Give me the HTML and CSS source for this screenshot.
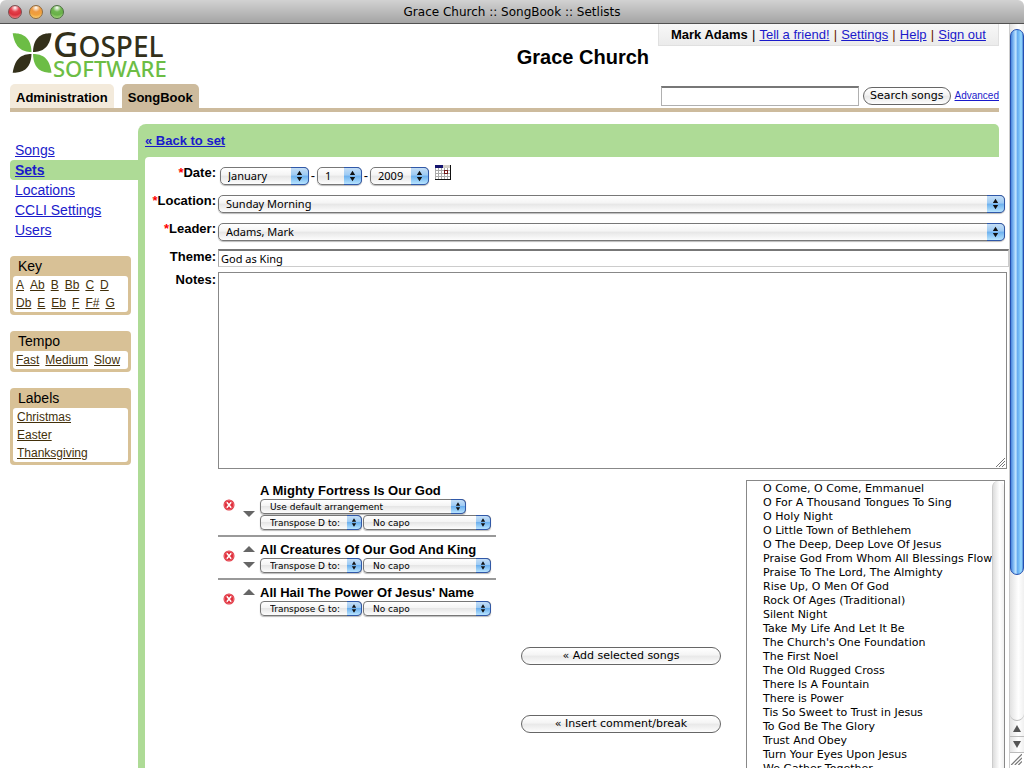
FILE: index.html
```html
<!DOCTYPE html>
<html lang="en">
<head>
    <meta charset="UTF-8">
    <meta name="viewport" content="width=device-width, initial-scale=1.0">
    <title>Grace Church :: SongBook :: Setlists</title>
    <link rel="stylesheet" href="styles.css">
</head>
<body>
    <!-- shared icons -->
    <svg class="defs" width="0" height="0">
        <symbol id="arrows" viewBox="0 0 18 18">
            <path d="M9 3l3 5H6zM9 15l3-5H6z" fill="#111"/>
        </symbol>
        <symbol id="remove" viewBox="0 0 12 12">
            <circle cx="6" cy="6" r="5.5" fill="#e0303c"/>
            <circle cx="6" cy="6" r="4.6" fill="none" stroke="#f08088" stroke-width=".6"/>
            <path d="M3.8 3.2l4.4 5.6M8.2 3.2L3.8 8.8" stroke="#fff" stroke-width="1.5"/>
        </symbol>
        <symbol id="up" viewBox="0 0 12 6"><path d="M6 0l6 6H0z" fill="#666"/></symbol>
        <symbol id="down" viewBox="0 0 12 6"><path d="M6 6l6-6H0z" fill="#666"/></symbol>
        <symbol id="grip" viewBox="0 0 10 10">
            <path d="M1 10l9-9M4 10l6-6M7 10l3-3" stroke="#777" fill="none"/>
        </symbol>
    </svg>

    <div class="titlebar">
        <div class="lights">
            <span class="light red"></span>
            <span class="light orange"></span>
            <span class="light green"></span>
        </div>
        <span class="window-title">Grace Church :: SongBook :: Setlists</span>
    </div>

    <div class="viewport">
        <div class="page">
            <header class="header">
                <div class="brand">
                    <svg class="logo" width="156" height="54" viewBox="0 0 156 54" role="img" aria-label="Gospel Software">
                        <path d="M2.700 4.300C10 4 21 6 21.500 23C12 23 5 19 2.700 4.300z" fill="#6cbd45"/>
                        <path d="M41.500 4.300C34 4 23.500 6 23 23C32.500 23 39.500 19 41.500 4.300z" fill="#33301a"/>
                        <path d="M2.700 43.700C10 44 21 42 21.500 25C12 25 5 29 2.700 43.700z" fill="#33301a"/>
                        <path d="M41.500 43.700C34 44 23.500 42 23 25C32.500 25 39.500 29 41.500 43.700z" fill="#6cbd45"/>
                        <text class="logo-top" x="43" y="28"><tspan class="logo-cap">G</tspan>OSPEL</text>
                        <text class="logo-bottom" x="43" y="48">SOFTWARE</text>
                    </svg>
                    <nav class="tabs">
                        <a href="#" class="tab">Administration</a>
                        <a href="#" class="tab active">SongBook</a>
                    </nav>
                </div>
                <h1>Grace Church</h1>
                <div class="tools">
                    <div class="userbar">
                        <b>Mark Adams</b> | <a href="#">Tell a friend!</a> <i>|</i> <a href="#">Settings</a> <i>|</i> <a href="#">Help</a> <i>|</i> <a href="#">Sign out</a>
                    </div>
                    <form class="search">
                        <input type="text" aria-label="Search songs">
                        <button type="button" class="btn">Search songs</button>
                        <a href="#">Advanced</a>
                    </form>
                </div>
            </header>

            <div class="columns">
                <aside class="sidebar">
                    <nav class="menu">
                        <a href="#">Songs</a>
                        <a href="#" class="current">Sets</a>
                        <a href="#">Locations</a>
                        <a href="#">CCLI Settings</a>
                        <a href="#">Users</a>
                    </nav>
                    <section class="box">
                        <h2>Key</h2>
                        <div class="box-links">
                            <a href="#">A</a><a href="#">Ab</a><a href="#">B</a><a href="#">Bb</a><a href="#">C</a><a href="#">D</a>
                            <a href="#">Db</a><a href="#">E</a><a href="#">Eb</a><a href="#">F</a><a href="#">F#</a><a href="#">G</a>
                        </div>
                    </section>
                    <section class="box">
                        <h2>Tempo</h2>
                        <div class="box-links">
                            <a href="#">Fast</a><a href="#">Medium</a><a href="#">Slow</a>
                        </div>
                    </section>
                    <section class="box">
                        <h2>Labels</h2>
                        <div class="box-links stacked">
                            <a href="#">Christmas</a>
                            <a href="#">Easter</a>
                            <a href="#">Thanksgiving</a>
                        </div>
                    </section>
                </aside>

                <main class="main">
                    <div class="main-head"><a href="#">« Back to set</a></div>
                    <form class="set-form">
                        <label for="month"><em>*</em>Date:</label>
                        <div class="field date">
                            <span class="select month"><select id="month"><option>January</option></select><svg><use href="#arrows"/></svg></span>
                            <span class="dash">-</span>
                            <span class="select day"><select aria-label="Day"><option>1</option></select><svg><use href="#arrows"/></svg></span>
                            <span class="dash">-</span>
                            <span class="select year"><select aria-label="Year"><option>2009</option></select><svg><use href="#arrows"/></svg></span>
                            <svg class="calendar" width="16" height="15" viewBox="0 0 16 15">
                                <rect width="16" height="15" fill="#fff"/>
                                <path d="M0 5.5h15M0 8.5h15M0 11.5h15M3.5 3v11M6.5 3v11M9.5 3v11M12.5 3v11M.5 0v14" stroke="#aaa"/>
                                <path d="M0 0h16v3H0z" fill="#d4d0c8"/>
                                <path d="M0 0h8v3H0z" fill="#14146e"/>
                                <path d="M15.5 0v15M0 14.5h16" stroke="#111"/>
                                <rect x="9.5" y="5.5" width="3" height="3" fill="#fff" stroke="#701818"/>
                            </svg>
                        </div>

                        <label for="location"><em>*</em>Location:</label>
                        <div class="field"><span class="select wide"><select id="location"><option>Sunday Morning</option></select><svg><use href="#arrows"/></svg></span></div>

                        <label for="leader"><em>*</em>Leader:</label>
                        <div class="field"><span class="select wide"><select id="leader"><option>Adams, Mark</option></select><svg><use href="#arrows"/></svg></span></div>

                        <label for="theme">Theme:</label>
                        <div class="field theme"><input type="text" id="theme" value="God as King"></div>

                        <label for="notes">Notes:</label>
                        <div class="field notes">
                            <textarea id="notes"></textarea>
                            <svg class="grip" width="10" height="10"><use href="#grip"/></svg>
                        </div>

                        <div class="songs">
                            <ul class="setlist">
                                <li>
                                    <button type="button" class="icon remove" aria-label="Remove"><svg width="12" height="12"><use href="#remove"/></svg></button>
                                    <div class="move">
                                        <span></span>
                                        <button type="button" class="icon" aria-label="Move down"><svg width="12" height="6"><use href="#down"/></svg></button>
                                    </div>
                                    <div class="song">
                                        <h3>A Mighty Fortress Is Our God</h3>
                                        <div class="options">
                                            <span class="select small arrangement"><select aria-label="Arrangement"><option>Use default arrangement</option></select><svg><use href="#arrows"/></svg></span>
                                        </div>
                                        <div class="options">
                                            <span class="select small key"><select aria-label="Transpose"><option>Transpose D to:</option></select><svg><use href="#arrows"/></svg></span>
                                            <span class="select small capo"><select aria-label="Capo"><option>No capo</option></select><svg><use href="#arrows"/></svg></span>
                                        </div>
                                    </div>
                                </li>
                                <li>
                                    <button type="button" class="icon remove" aria-label="Remove"><svg width="12" height="12"><use href="#remove"/></svg></button>
                                    <div class="move">
                                        <button type="button" class="icon" aria-label="Move up"><svg width="12" height="6"><use href="#up"/></svg></button>
                                        <button type="button" class="icon" aria-label="Move down"><svg width="12" height="6"><use href="#down"/></svg></button>
                                    </div>
                                    <div class="song">
                                        <h3>All Creatures Of Our God And King</h3>
                                        <div class="options">
                                            <span class="select small key"><select aria-label="Transpose"><option>Transpose D to:</option></select><svg><use href="#arrows"/></svg></span>
                                            <span class="select small capo"><select aria-label="Capo"><option>No capo</option></select><svg><use href="#arrows"/></svg></span>
                                        </div>
                                    </div>
                                </li>
                                <li>
                                    <button type="button" class="icon remove" aria-label="Remove"><svg width="12" height="12"><use href="#remove"/></svg></button>
                                    <div class="move">
                                        <button type="button" class="icon" aria-label="Move up"><svg width="12" height="6"><use href="#up"/></svg></button>
                                        <span></span>
                                    </div>
                                    <div class="song">
                                        <h3>All Hail The Power Of Jesus' Name</h3>
                                        <div class="options">
                                            <span class="select small key"><select aria-label="Transpose"><option>Transpose G to:</option></select><svg><use href="#arrows"/></svg></span>
                                            <span class="select small capo"><select aria-label="Capo"><option>No capo</option></select><svg><use href="#arrows"/></svg></span>
                                        </div>
                                    </div>
                                </li>
                            </ul>
                            <div class="actions">
                                <button type="button" class="btn">« Add selected songs</button>
                                <button type="button" class="btn">« Insert comment/break</button>
                            </div>
                            <div class="library">
                                <select multiple size="30" aria-label="Songs">
                                    <option>O Come, O Come, Emmanuel</option>
                                    <option>O For A Thousand Tongues To Sing</option>
                                    <option>O Holy Night</option>
                                    <option>O Little Town of Bethlehem</option>
                                    <option>O The Deep, Deep Love Of Jesus</option>
                                    <option>Praise God From Whom All Blessings Flow</option>
                                    <option>Praise To The Lord, The Almighty</option>
                                    <option>Rise Up, O Men Of God</option>
                                    <option>Rock Of Ages (Traditional)</option>
                                    <option>Silent Night</option>
                                    <option>Take My Life And Let It Be</option>
                                    <option>The Church's One Foundation</option>
                                    <option>The First Noel</option>
                                    <option>The Old Rugged Cross</option>
                                    <option>There Is A Fountain</option>
                                    <option>There is Power</option>
                                    <option>Tis So Sweet to Trust in Jesus</option>
                                    <option>To God Be The Glory</option>
                                    <option>Trust And Obey</option>
                                    <option>Turn Your Eyes Upon Jesus</option>
                                    <option>We Gather Together</option>
                                </select>
                                <div class="track"></div>
                            </div>
                        </div>
                    </form>
                </main>
            </div>
        </div>

        <div class="scrollbar">
            <div class="scroll-track"><div class="thumb"></div></div>
            <div class="scroll-btn"><svg width="8" height="7"><path d="M4 0l4 7H0z" fill="#555"/></svg></div>
            <div class="scroll-btn"><svg width="8" height="7"><path d="M4 7l4-7H0z" fill="#555"/></svg></div>
            <div class="corner"><svg width="12" height="12"><use href="#grip"/></svg></div>
        </div>
    </div>
</body>
</html>
```
FILE: styles.css
```css
* {
    box-sizing: border-box;
}
body {
    margin: 0;
    height: 100vh;
    overflow: hidden;
    display: flex;
    flex-direction: column;
    background: #fff;
    color: #000;
    font-family: "Liberation Sans", Arial, sans-serif;
    font-size: 13px;
}
a {
    color: #1a1acb;
}
button, input, select, textarea {
    font-family: "Noto Sans", sans-serif;
    font-size: 11px;
    color: #000;
    margin: 0;
}
.defs {
    position: absolute;
}

/* window */
.titlebar {
    flex: none;
    display: grid;
    grid-template-columns: 1fr auto 1fr;
    align-items: center;
    height: 24px;
    padding: 0 8px;
    border-bottom: 1px solid #515151;
    border-radius: 6px 6px 0 0;
    background: linear-gradient(#d2d2d2, #a4a4a4);
}
.window-title {
    font-family: "DejaVu Sans", sans-serif;
    font-size: 12px;
    line-height: 16px;
}
.lights {
    display: flex;
    gap: 7px;
}
.light {
    width: 14px;
    height: 14px;
    border: 1px solid #7a5050;
    border-radius: 50%;
}
.red {
    background: radial-gradient(circle at 50% 15%, #fff 0, #e5404c 35%, #d8303c 60%, #ff9f9f);
}
.orange {
    border-color: #8e6a3e;
    background: radial-gradient(circle at 50% 15%, #fff 0, #ee9a42 35%, #f0a03c 60%, #ffe68c);
}
.green {
    border-color: #4c7040;
    background: radial-gradient(circle at 50% 15%, #fff 0, #6fb650 35%, #68b048 60%, #c8f09c);
}
.viewport {
    flex: 1;
    display: flex;
    min-height: 0;
}
.page {
    flex: 1;
    min-width: 0;
    padding: 0 10px;
    overflow: hidden;
}

/* header */
.header {
    display: flex;
    height: 88px;
    border-bottom: 4px solid #cdbb9d;
}
.brand {
    flex: 1;
    display: flex;
    flex-direction: column;
    justify-content: space-between;
    padding-top: 5px;
}
.logo {
    overflow: visible;
}
.logo-top {
    font: 500 28px "Noto Sans", sans-serif;
    fill: #33301a;
}
.logo-cap {
    font-size: 35px;
}
.logo-bottom {
    font: 500 22px "Noto Sans", sans-serif;
    fill: #6cbd45;
}
.tabs {
    display: flex;
    gap: 8px;
}
.tab {
    padding: 4px 6px 0;
    line-height: 20px;
    border-radius: 5px 5px 0 0;
    background: #f3eadb;
    color: #000;
    font-weight: bold;
    text-decoration: none;
}
.tab.active {
    background: #cdbb9d;
}
h1 {
    margin: 21px 9px 0;
    font-size: 20px;
    line-height: 24px;
}
.tools {
    width: 341px;
    display: flex;
    flex-direction: column;
    justify-content: space-between;
}
.userbar {
    display: flex;
    justify-content: space-between;
    padding: 0 12px;
    border: 1px solid #e0e0e0;
    border-top: 0;
    background: linear-gradient(#f8f8f8, #ebebeb);
    line-height: 21px;
    white-space: nowrap;
}
.userbar i {
    color: #6b1a00;
    font-style: normal;
}
.search {
    display: flex;
    align-items: center;
    gap: 4px;
    padding: 0 0 2px 3px;
}
.search input {
    flex: 1;
    min-width: 0;
    height: 20px;
    border: 1px solid #b0b0b0;
    border-top: 2px solid #777;
}
.search a {
    font-size: 10px;
    line-height: 12px;
}
.btn {
    height: 18px;
    padding: 0 6px;
    border: 1px solid #666;
    border-radius: 9px;
    background: linear-gradient(#fff, #f4f4f4 45%, #e8e8e8 50%, #fdfdfd);
    font-family: "DejaVu Sans", sans-serif;
    line-height: 16px;
    white-space: nowrap;
}

/* sidebar */
.columns {
    display: flex;
    padding-top: 12px;
}
.sidebar {
    width: 128px;
    padding-top: 16px;
}
.menu {
    margin-bottom: 16px;
    font-size: 14px;
    line-height: 20px;
}
.menu a {
    display: block;
    padding-left: 5px;
}
.menu .current {
    border-radius: 4px 0 0 4px;
    background: #aedb96;
    font-weight: bold;
}
.box {
    margin: 0 7px 16px 0;
    padding: 0 3px 3px;
    border-radius: 4px;
    background: #d8c196;
}
.box h2 {
    margin: 0;
    padding-left: 5px;
    font-size: 14px;
    font-weight: normal;
    line-height: 20px;
}
.box-links {
    display: flex;
    flex-wrap: wrap;
    column-gap: 6px;
    padding: 0 3px;
    border-radius: 3px;
    background: #fff;
    font-size: 12px;
    line-height: 18px;
}
.box-links a {
    color: #43300a;
}
.stacked {
    flex-direction: column;
    align-items: flex-start;
    padding: 0 4px;
}

/* main */
.main {
    flex: 1;
    min-width: 0;
    border-radius: 8px 5px 0 0;
    background: #aedb96;
    padding-left: 7px;
}
.main-head {
    line-height: 33px;
    font-weight: bold;
}
.set-form {
    display: grid;
    grid-template-columns: 71px 1fr;
    column-gap: 2px;
    margin-right: -10px;
    padding-top: 6px;
    border-radius: 4px 0 0 0;
    background: #fff;
}
.set-form label {
    padding-top: 2px;
    font-weight: bold;
    line-height: 16px;
    text-align: right;
    white-space: nowrap;
}
.set-form em {
    color: #f00;
    font-style: normal;
}
.field {
    display: flex;
    align-items: flex-start;
    height: 28px;
    padding: 4px 4px 0 0;
}
.date {
    padding-left: 2px;
}
.dash {
    width: 8px;
    line-height: 18px;
    text-align: center;
}
.calendar {
    margin: -2px 0 0 6px;
}
.select {
    position: relative;
    display: block;
}
.select select {
    display: block;
    width: 100%;
    height: 18px;
    padding: 0 20px 1px 7px;
    border: 1px solid #777;
    border-radius: 5px;
    appearance: none;
    background: linear-gradient(#fff, #f4f4f4 45%, #e6e6e6 50%, #fdfdfd);
    box-shadow: 0 1px 1px #bbb;
    font-size: 11px;
}
.select svg {
    position: absolute;
    top: 0;
    right: 0;
    width: 18px;
    height: 18px;
    border: 1px solid #3058a8;
    border-left: 0;
    border-radius: 0 5px 5px 0;
    background: linear-gradient(#c4def6, #9ccaf4 45%, #6cb0ee 50%, #b8e4ff);
    pointer-events: none;
}
.month {
    width: 89px;
}
.day {
    width: 45px;
}
.year {
    width: 59px;
}
.wide {
    flex: 1;
}
.theme {
    height: 23px;
    padding: 2px 0 0;
}
.theme input {
    width: 100%;
    height: 18px;
    padding: 0 2px 1px;
    border: 1px solid #ccc;
    border-top: 2px solid #777;
    border-left-color: #aaa;
}
.notes {
    position: relative;
    height: auto;
    padding: 2px 2px 0 0;
}
.notes textarea {
    width: 100%;
    height: 197px;
    border: 1px solid #888;
    resize: none;
}
.grip {
    position: absolute;
    right: 4px;
    bottom: 2px;
}

/* songs */
.songs {
    grid-column: 2;
    display: flex;
    gap: 25px;
    padding: 11px 4px 0 0;
}
.setlist {
    width: 278px;
    margin: 0;
    padding: 0;
    list-style: none;
}
.setlist li {
    display: flex;
    align-items: center;
    padding: 3px 0 4px 5px;
    border-bottom: 2px solid #999;
}
.setlist li + li {
    padding-top: 5px;
}
.setlist li:last-child {
    border-bottom: 0;
}
.icon {
    display: block;
    padding: 0;
    border: 0;
    background: none;
}
.remove {
    margin-bottom: 4px;
}
.icon svg {
    display: block;
}
.move {
    display: flex;
    flex-direction: column;
    gap: 10px;
    margin: 0 5px 2px 8px;
}
.move span {
    width: 12px;
    height: 6px;
}
.song h3 {
    margin: 0;
    font-size: 13px;
    line-height: 16px;
    white-space: nowrap;
}
.options {
    display: flex;
    gap: 1px;
    height: 16px;
}
.small select {
    height: 15px;
    padding: 0 16px 0 9px;
    border-radius: 4px;
    font-family: "DejaVu Sans", sans-serif;
    font-size: 9px;
    line-height: 12px;
}
.small svg {
    width: 15px;
    height: 15px;
}
.arrangement {
    width: 206px;
}
.key {
    width: 102px;
}
.capo {
    width: 128px;
}
.actions {
    flex: 1;
    display: flex;
    flex-direction: column;
    gap: 50px;
    padding-top: 167px;
}
.library {
    width: 259px;
    display: flex;
    border: 1px solid #888;
}
.library select {
    flex: 1;
    min-width: 0;
    padding: 1px 0 0;
    border: 0;
    outline: 0;
    font-family: "DejaVu Sans", sans-serif;
}
.library option {
    height: 14px;
    min-height: 14px;
    padding: 0 0 0 16px;
    font-size: 11px;
    line-height: 14px;
}
.track {
    width: 12px;
    border-left: 1px solid #ccc;
    border-radius: 6px 6px 0 0;
    background: linear-gradient(90deg, #ddd, #fff 60%, #f0f0f0);
}

/* page scrollbar */
.scrollbar {
    flex: none;
    width: 15px;
    display: flex;
    flex-direction: column;
    border-left: 1px solid #ccc;
    background: linear-gradient(90deg, #e2e2e2, #fff 60%, #f0f0f0);
}
.scroll-track {
    flex: 1;
    padding-top: 5px;
    border-bottom: 1px solid #bbb;
    border-radius: 0 0 7px 7px;
}
.thumb {
    height: 79%;
    border: 1px solid #2450b0;
    border-radius: 7px;
    background: linear-gradient(90deg, #4a86dc, #8cc4f8 25%, #c4e6ff 40%, #62aaf0 55%, #98dcff 85%, #4c88d8);
}
.scroll-btn {
    height: 16px;
    display: flex;
    align-items: center;
    justify-content: center;
    border-bottom: 1px solid #bbb;
}
.corner {
    height: 15px;
    background: #fff;
}
```
